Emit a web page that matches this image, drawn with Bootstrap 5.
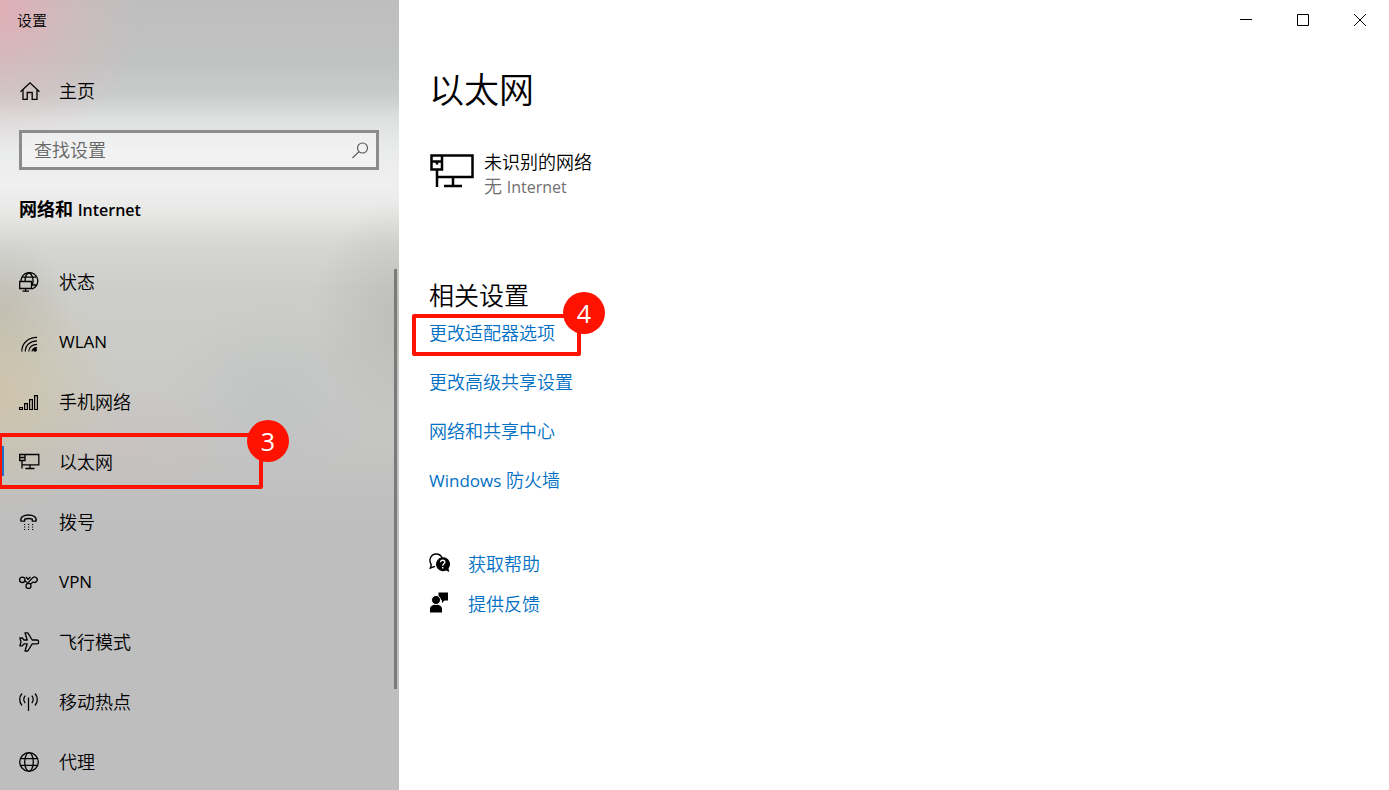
<!DOCTYPE html>
<html lang="zh-CN">
<head>
<meta charset="utf-8">
<meta name="viewport" content="width=device-width, initial-scale=1">
<title>设置</title>
<link href="https://cdn.jsdelivr.net/npm/bootstrap@5.3.0/dist/css/bootstrap.min.css" rel="stylesheet">
<style>
  body { font-family: "Open Sans", "Noto Sans CJK SC", sans-serif; font-size: 18px; line-height: 24px; font-weight: 350; color: #000; background: #fff; }
  .latin { font-size: 17px; font-weight: 400; }
  svg { flex: none; fill: none; stroke: currentColor; }
  .solid { fill: currentColor; stroke: none; }

  .side {
    width: 399px;
    background:
      radial-gradient(circle 140px at 0 10px, rgba(236,170,180,.75), rgba(230,180,186,.3) 55%, rgba(225,190,194,0)),
      radial-gradient(ellipse 120px 120px at 0 395px, rgba(208,192,152,.6), rgba(208,196,165,0)),
      radial-gradient(ellipse 100px 70px at 130px 440px, rgba(204,190,186,.4), rgba(204,190,186,0)),
      radial-gradient(ellipse 110px 90px at 275px 390px, rgba(180,186,192,.35), rgba(180,186,192,0)),
      radial-gradient(ellipse 90px 120px at 400px 320px, rgba(174,174,171,.5), rgba(174,174,171,0)),
      radial-gradient(ellipse 70px 80px at 0 310px, rgba(180,174,164,.5), rgba(180,174,164,0)),
      linear-gradient(#bebebe 0, #c1c2c2 60px, #cacbcb 95px, #dfe0e0 120px, #eaebeb 150px, #f0f0f0 185px, #e6e7e5 215px, #d6d7d4 245px, #cdcec9 290px, #c9cac7 390px, #c3c3c2 460px, #bebebe 520px, #bebebe);
  }
  .side > * { flex-shrink: 0; }
  .caption { font-size: 15px; line-height: 40px; padding-left: 17px; }
  .row-link { color: #000; text-decoration: none; padding-left: 19px; gap: 19px; }
  .row-link:hover { color: #000; background: rgba(0,0,0,.06); }
  .row-link svg { width: 21px; }
  .home { height: 40px; margin-top: 31px; }
  .search { height: 40px; margin: 19px 20px 0 19px; border: 3px solid #8c8c8c; background: rgba(255,255,255,.35); padding: 0 7px 0 12px; }
  .search input { font-size: 18px; line-height: 24px; font-weight: 350; min-width: 0; outline: 0; }
  .search input::placeholder { color: #666; opacity: 1; }
  .search svg { color: #555; }
  .group-title { font-size: 18px; line-height: 38px; font-weight: 700; margin: 20px 0 23px; padding-left: 19px; }
  .group-title .latin { font-size: 16px; font-weight: 600; }
  .side .item { height: 60px; }
  .thumb { width: 3px; height: 420px; right: 2px; top: 269px; background: #7a7a7a; }
  .current::before { content: ""; position: absolute; left: 2px; top: 14px; width: 2px; height: 30px; background: #1f6fc4; }

  .frame { border: 4px solid #ff1200; border-radius: 2px; pointer-events: none; }
  .step { width: 42px; height: 42px; border-radius: 50%; background: #ff1200; color: #fff; font-size: 25px; line-height: 42px; font-weight: 400; text-align: center; pointer-events: none; }
  .frame-side { left: -2px; top: 1px; width: 265px; height: 56px; }
  .step-side { left: 247px; top: -12px; }
  .frame-main { left: -17px; top: 5px; width: 169px; height: 42px; }
  .step-main { left: 134px; top: -17px; }

  .win-btn { width: 57px; height: 40px; border: 0; background: none; padding: 0 1px 4px 0; color: #000; }
  .content-area { padding: 28px 30px 0; }
  h1 { font-size: 35px; line-height: 44px; font-weight: 350; margin: 0 0 38px; }
  .net { gap: 9px; margin-bottom: 81px; }
  .muted { color: #707070; }
  .muted .latin { font-size: 16px; }
  h2 { font-size: 25px; line-height: 30px; font-weight: 350; margin: 0; }
  .blue { color: #0070c5; text-decoration: none; }
  .blue:hover { text-decoration: underline; }
  .related { line-height: 49px; margin-top: -1px; }
  .support { margin-top: 39px; }
  .support a { height: 40px; gap: 18px; }
</style>
</head>
<body>
<div class="d-flex vh-100 overflow-hidden">
  <aside class="side position-relative d-flex flex-column flex-shrink-0 overflow-hidden">
    <div class="caption">设置</div>
    <a href="#" class="row-link home d-flex align-items-center">
      <svg width="21" height="20" viewBox="0 0 21 20" stroke-width="1.300"><path d="M1.500 10.800 11 1.800l9.500 9M4 9v9.300h4.200V11.500h5v6.800H18V9"/></svg>
      <span>主页</span>
    </a>
    <label class="search d-flex align-items-center">
      <input class="flex-grow-1 border-0 bg-transparent p-0" type="text" placeholder="查找设置" aria-label="查找设置">
      <svg width="18" height="18" viewBox="0 0 18 18" stroke-width="1.100"><circle cx="11.500" cy="7" r="5"/><path d="M8 10.600 1.500 17"/></svg>
    </label>
    <h3 class="group-title">网络和 <span class="latin">Internet</span></h3>
    <nav>
      <a href="#" class="row-link item d-flex align-items-center">
        <svg width="21" height="20" viewBox="0 0 21 20" stroke-width="1.300"><path d="M.7 9.500h11.800v7H.7zM6.600 16.500v2.500M3.500 19.200h6.500M2 9.500A8.400 8.400 0 1 1 13 17M6 9.500C6 5 7.500 1 10 1s4.300 5 4 9c-.1 1.300-.4 2.500-1 3.200M3.500 5.200h13.500M12.500 13h5.500"/></svg>
        <span>状态</span>
      </a>
      <a href="#" class="row-link item d-flex align-items-center">
        <svg width="21" height="20" viewBox="0 0 21 20" stroke-width="1.200"><path d="M2.800 19.500C2.800 11 9.500 5.300 18 5.300M6.300 19.500C6.300 13 11.500 8.900 18 8.900M9.800 19.500C9.800 15 13.500 12.400 18 12.400M13 19.500c0-2.500 2-3.800 5-3.800"/><circle class="solid" cx="16" cy="17.700" r="2"/></svg>
        <span class="latin">WLAN</span>
      </a>
      <a href="#" class="row-link item d-flex align-items-center">
        <svg width="21" height="20" viewBox="0 0 21 20" stroke-width="1.200"><path d="M.6 15.500h2.800v2H.6zM5.600 11.600h2.800v5.900H5.600zM10.600 7.600h2.800v9.900h-2.800zM15.600 3.600h2.800v13.900h-2.800z"/></svg>
        <span>手机网络</span>
      </a>
      <a href="#" class="row-link item current position-relative d-flex align-items-center" aria-current="page">
        <svg width="21" height="20" viewBox="0 0 21 20" stroke-width="1.300"><path d="M6 2.500h13.800v10.300H2.800M.7 2.500H6v6H.7zM.7 5.500H6M3 8.500v8M11 12.800v3.500M6.500 16.500h9"/></svg>
        <span>以太网</span>
        <span class="frame frame-side position-absolute"></span>
        <span class="step step-side position-absolute">3</span>
      </a>
      <a href="#" class="row-link item d-flex align-items-center">
        <svg width="21" height="20" viewBox="0 0 21 20" stroke-width="1.300"><path d="M2 9.200C.8 5 5 3 9.500 3S18.200 5 17 9.200h-3.700V7.100c-2.500-.8-5-.8-7.600 0v2.100z"/><path stroke-width="1.200" stroke-dasharray="1.200 2.800" d="M5 12.500h10M5 15h10M5 17.500h10"/></svg>
        <span>拨号</span>
      </a>
      <a href="#" class="row-link item d-flex align-items-center">
        <svg width="21" height="20" viewBox="0 0 21 20" stroke-width="1.300"><circle cx="3.300" cy="7.800" r="2.700"/><circle cx="9.500" cy="13.900" r="2.500"/><path d="M8 11.900 13.300 6.200a2.700 2.700 0 1 1 .8 3.800L11.300 12.200M5.700 8.700 8 10.500M7 5l2 2.300L11.500 5"/></svg>
        <span class="latin">VPN</span>
      </a>
      <a href="#" class="row-link item d-flex align-items-center">
        <svg width="21" height="20" viewBox="0 0 21 20" stroke-width="1.300" stroke-linejoin="round"><path d="M6 .8h2.800l4.400 7.200H18c2.200 0 2.200 3.800 0 3.800h-4.800l-4.400 7.200H6l2.200-7.200H5l-1.700 2H.9L2 10 .9 6h2.400L5 8h3.200z"/></svg>
        <span>飞行模式</span>
      </a>
      <a href="#" class="row-link item d-flex align-items-center">
        <svg width="21" height="20" viewBox="0 0 21 20" stroke-width="1.300"><path d="M9.500 5.500v13.500M3 1.500a9 9 0 0 0 0 12M16 1.500a9 9 0 0 1 0 12M6.200 3.700a6 6 0 0 0 0 7.500M12.800 3.700a6 6 0 0 1 0 7.500"/></svg>
        <span>移动热点</span>
      </a>
      <a href="#" class="row-link item d-flex align-items-center">
        <svg width="21" height="20" viewBox="0 0 21 20" stroke-width="1.300"><circle cx="10" cy="10" r="9.300"/><ellipse cx="10" cy="10" rx="4.300" ry="9.300"/><path d="M1.500 6.700h17M1.500 13.300h17"/></svg>
        <span>代理</span>
      </a>
    </nav>
    <div class="thumb position-absolute"></div>
  </aside>

  <main class="flex-grow-1">
    <div class="d-flex justify-content-end">
      <button class="win-btn" type="button" aria-label="最小化"><svg width="12" height="12" viewBox="0 0 12 12"><path d="M0 5.500h12"/></svg></button>
      <button class="win-btn" type="button" aria-label="最大化"><svg width="12" height="12" viewBox="0 0 12 12"><path d="M.5.5h11v11H.5z"/></svg></button>
      <button class="win-btn" type="button" aria-label="关闭"><svg width="12" height="12" viewBox="0 0 12 12"><path d="m0 0 12 12M12 0 0 12"/></svg></button>
    </div>
    <div class="content-area">
      <h1>以太网</h1>
      <div class="net d-flex">
        <svg width="46" height="44" viewBox="0 0 46 44" stroke-width="2.500"><path d="M13 5.500h30.500v21.500H7M2.500 5.500H13v14H2.500zM2.500 11.500H13M8 11.500v3M8 19.500v17.500M24 27v8.500M15 36h18"/></svg>
        <div>
          <div>未识别的网络</div>
          <div class="muted">无 <span class="latin">Internet</span></div>
        </div>
      </div>
      <h2>相关设置</h2>
      <div class="related d-flex flex-column align-items-start">
        <div class="position-relative">
          <a class="blue" href="#">更改适配器选项</a>
          <span class="frame frame-main position-absolute"></span>
          <span class="step step-main position-absolute">4</span>
        </div>
        <a class="blue" href="#">更改高级共享设置</a>
        <a class="blue" href="#">网络和共享中心</a>
        <a class="blue" href="#"><span class="latin">Windows</span> 防火墙</a>
      </div>
      <div class="support d-flex flex-column align-items-start">
        <a class="blue d-flex align-items-center" href="#">
          <svg width="21" height="22" viewBox="0 0 21 22" color="#000"><path stroke-width="1.400" d="M6 13.300 1.300 15l1-3.300C-.8 7 2 1 7 1c3 0 5.200 1.500 6.200 4"/><path class="solid" d="M13.500 4.200a7 7 0 1 0 3.700 13.200L20.300 19l-.8-3.500A7 7 0 0 0 13.500 4.200z"/><path stroke="#fff" stroke-width="1.400" d="M11.500 9.300c0-2.800 4.300-2.600 4.300 0 0 1.500-2.100 1.400-2.100 3.400M13.700 14v1.500"/></svg>
          <span>获取帮助</span>
        </a>
        <a class="blue d-flex align-items-center" href="#">
          <svg width="21" height="24" viewBox="0 0 21 24" color="#000"><path class="solid" d="M9.500.5H19v8h-3.500L13 11V8.500L9.500 6zM1 20.500V17c0-6 12-6 12 0v3.500z"/><circle cx="7" cy="8" r="4.500" fill="#000" stroke="#fff"/></svg>
          <span>提供反馈</span>
        </a>
      </div>
    </div>
  </main>
</div>
<script src="https://cdn.jsdelivr.net/npm/bootstrap@5.3.0/dist/js/bootstrap.bundle.min.js"></script>
</body>
</html>
